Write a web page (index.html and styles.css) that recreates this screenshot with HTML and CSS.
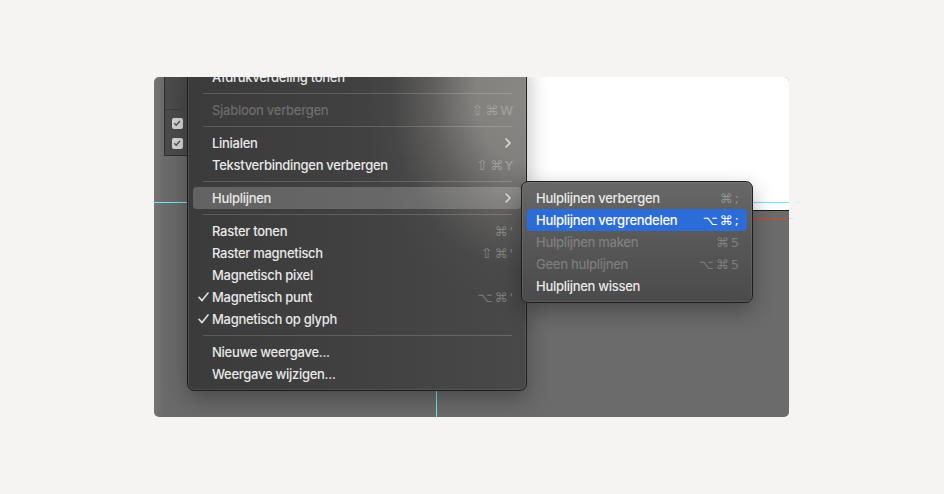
FILE: index.html
```html
<!DOCTYPE html>
<html lang="nl">
<head>
<meta charset="utf-8">
<title>Weergave menu</title>
<link rel="stylesheet" href="styles.css">
</head>
<body>
<div class="shot">
  <div class="panel">
    <div class="panel-sep"></div>
    <div class="cb"><svg viewBox="0 0 10 10" width="10" height="10"><polyline points="2.2,5.2 4.2,7.2 7.9,3" /></svg></div>
    <div class="cb"><svg viewBox="0 0 10 10" width="10" height="10"><polyline points="2.2,5.2 4.2,7.2 7.9,3" /></svg></div>
  </div>
  <div class="artboard"></div>
  <div class="doc-edge"></div>
  <div class="red-line"></div>
  <div class="guide-h"></div>
  <div class="guide-v"></div>

  <div class="menu">
    <div class="item"><span class="label">Afdrukverdeling tonen</span></div>
    <div class="sep"></div>
    <div class="item disabled"><span class="label">Sjabloon verbergen</span><span class="keys"><span class="shift">⇧</span>⌘W</span></div>
    <div class="sep"></div>
    <div class="item"><span class="label">Linialen</span><svg class="chev" viewBox="0 0 6 10" width="6" height="10"><polyline points="1,1 5,5 1,9" /></svg></div>
    <div class="item"><span class="label">Tekstverbindingen verbergen</span><span class="keys"><span class="shift">⇧</span>⌘Y</span></div>
    <div class="sep"></div>
    <div class="item open"><span class="label">Hulplijnen</span><svg class="chev" viewBox="0 0 6 10" width="6" height="10"><polyline points="1,1 5,5 1,9" /></svg></div>
    <div class="sep"></div>
    <div class="item"><span class="label">Raster tonen</span><span class="keys">⌘'</span></div>
    <div class="item"><span class="label">Raster magnetisch</span><span class="keys"><span class="shift">⇧</span>⌘'</span></div>
    <div class="item"><span class="label">Magnetisch pixel</span></div>
    <div class="item"><svg class="check" viewBox="0 0 11 10" width="11" height="10"><polyline points="1,5.3 4,8.6 10,1" /></svg><span class="label">Magnetisch punt</span><span class="keys">⌥⌘'</span></div>
    <div class="item"><svg class="check" viewBox="0 0 11 10" width="11" height="10"><polyline points="1,5.3 4,8.6 10,1" /></svg><span class="label">Magnetisch op glyph</span></div>
    <div class="sep"></div>
    <div class="item"><span class="label">Nieuwe weergave...</span></div>
    <div class="item"><span class="label">Weergave wijzigen...</span></div>
  </div>

  <div class="submenu">
    <div class="item"><span class="label">Hulplijnen verbergen</span><span class="keys">⌘;</span></div>
    <div class="item selected"><span class="label">Hulplijnen vergrendelen</span><span class="keys">⌥⌘;</span></div>
    <div class="item disabled"><span class="label">Hulplijnen maken</span><span class="keys">⌘5</span></div>
    <div class="item disabled"><span class="label">Geen hulplijnen</span><span class="keys">⌥⌘5</span></div>
    <div class="item"><span class="label">Hulplijnen wissen</span></div>
  </div>
</div>
</body>
</html>
```

FILE: styles.css
```css
html, body {
  margin: 0;
  padding: 0;
}

body {
  background: #f5f4f2;
  width: 944px;
  height: 494px;
  overflow: hidden;
  font-family: "Inter", "DejaVu Sans", sans-serif;
}

.shot {
  position: relative;
  margin: 77px 0 0 154px;
  width: 635px;
  height: 340px;
  border-radius: 5px;
  overflow: hidden;
  background: linear-gradient(90deg, #747474 0px, #6a6a6a 10px, #6b6b6b 100%);
}

/* left tool panel */
.panel {
  position: absolute;
  left: 10px;
  top: 0;
  width: 23px;
  height: 79px;
  box-sizing: border-box;
  background: #4b4b4b;
  border-left: 1px solid #2f2f2f;
  border-bottom: 1px solid #2f2f2f;
  display: flex;
  flex-direction: column;
  align-items: flex-start;
  padding: 32px 0 0 7px;
  gap: 10px;
}

.panel-sep {
  width: 16px;
  height: 1px;
  margin-left: -7px;
  margin-bottom: -2px;
  background: #3c3c3c;
}

.cb {
  width: 11px;
  height: 11px;
  border-radius: 2px;
  background: #d6d6d6;
  display: flex;
}

.cb + .cb {
  margin-top: -1px;
}

.cb polyline {
  fill: none;
  stroke: #505050;
  stroke-width: 1.4;
}

/* document canvas */
.artboard {
  position: absolute;
  left: 330px;
  top: 0;
  right: 0;
  height: 133px;
  background: #ffffff;
}

.doc-edge {
  position: absolute;
  left: 330px;
  right: 0;
  top: 133px;
  height: 1px;
  background: #1a1a1a;
}

.red-line {
  position: absolute;
  left: 330px;
  right: 0;
  top: 141px;
  height: 1px;
  background: #e2421c;
}

.guide-h {
  position: absolute;
  left: 0;
  right: 0;
  top: 125px;
  height: 1px;
  background: #6fe7f4;
}

.guide-v {
  position: absolute;
  left: 282px;
  top: 0;
  bottom: 0;
  width: 1px;
  background: #6fe7f4;
}

/* menus */
.menu,
.submenu {
  position: absolute;
  box-sizing: border-box;
  padding: 5px;
  border: 1px solid #1e1e1e;
  border-radius: 7px;
  box-shadow: inset 0 0 0 1px rgba(255, 255, 255, 0.08), 0 8px 22px rgba(0, 0, 0, 0.3);
  display: flex;
  flex-direction: column;
  color: #e9e9e9;
  font-size: 13px;
  font-weight: 500;
  letter-spacing: -0.28px;
}

.menu {
  left: 33px;
  top: -17px;
  width: 340px;
  background:
    radial-gradient(ellipse 175px 230px at 335px 35px, rgba(137, 135, 132, 1) 0%, rgba(134, 132, 129, 0.95) 28%, rgba(106, 104, 102, 0.7) 52%, rgba(80, 80, 80, 0.25) 75%, rgba(70, 70, 70, 0) 92%),
    linear-gradient(90deg, #3b3b3b 0%, #404040 45%, #494949 100%);
}

.submenu {
  left: 367px;
  top: 104px;
  width: 232px;
  background: linear-gradient(180deg, #686868 0%, #575757 50%, #4b4b4b 100%);
}

.item {
  position: relative;
  height: 22px;
  display: flex;
  align-items: center;
  justify-content: space-between;
  padding: 0 8px 0 19px;
  border-radius: 4px;
  white-space: nowrap;
}

.submenu .item {
  padding-left: 9px;
}

.item.disabled .label {
  color: rgba(255, 255, 255, 0.25);
}

.item.open {
  background: rgba(255, 255, 255, 0.2);
}

.item.selected {
  background: #2c6cd9;
  color: #ffffff;
}

.keys {
  display: flex;
  align-items: center;
  color: rgba(255, 255, 255, 0.3);
  font-family: "DejaVu Sans", sans-serif;
  font-weight: 400;
  font-size: 13px;
  letter-spacing: 2px;
  margin-right: -2px;
}

.shift {
  font-size: 14px;
  line-height: 1;
}

.item.disabled .keys {
  color: rgba(255, 255, 255, 0.26);
}

.submenu .keys {
  color: rgba(255, 255, 255, 0.32);
}

.submenu .item.selected .keys {
  color: #ffffff;
}

.chev {
  margin-right: 2px;
}

.chev polyline {
  fill: none;
  stroke: #dcdcdc;
  stroke-width: 1.6;
  stroke-linecap: round;
  stroke-linejoin: round;
}

.check {
  position: absolute;
  left: 5px;
  top: 6px;
}

.check polyline {
  fill: none;
  stroke: #e0e0e0;
  stroke-width: 1.6;
  stroke-linecap: round;
  stroke-linejoin: round;
}

.sep {
  height: 1px;
  margin: 5px 9px 5px 10px;
  background: rgba(255, 255, 255, 0.17);
}
```
